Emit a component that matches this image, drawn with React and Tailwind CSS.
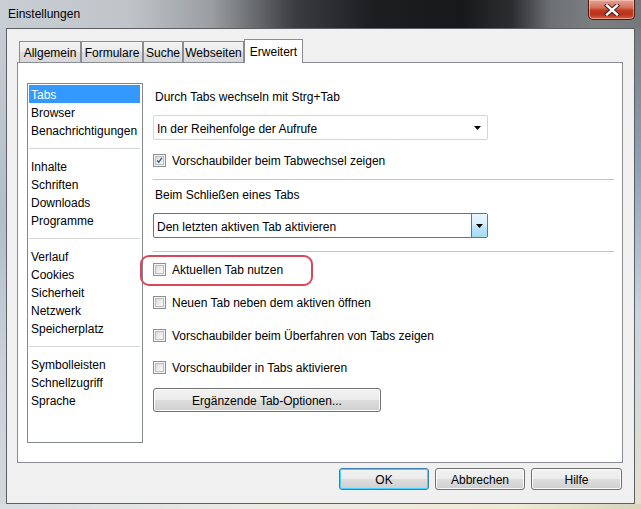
import React from "react";

const FONT = { fontFamily: '"Liberation Sans", Arial, sans-serif' };

function Arrow() {
  return (
    <svg width="7" height="4" viewBox="0 0 7 4" className="block">
      <path d="M0 0 H7 L3.5 4 Z" fill="#000" />
    </svg>
  );
}

function Checkbox({ checked }) {
  return (
    <span className="w-[13px] h-[13px] border border-[#8e8f8f] bg-[#f4f4f4] flex items-center justify-center shrink-0">
      <span className="w-[9px] h-[9px] border border-[#b9bcc0] bg-gradient-to-br from-[#dcdcdc] to-[#fbfbfb] flex items-center justify-center">
        {checked && (
          <svg width="9" height="9" viewBox="0 0 9 9" className="block">
            <path d="M1.5 4.5 L3.5 6.8 L7.5 1.2" stroke="#2c4a8a" strokeWidth="1.6" fill="none" />
          </svg>
        )}
      </span>
    </span>
  );
}

function CheckRow({ checked, label, children }) {
  return (
    <div className="relative h-[20px] flex items-center gap-[6px]">
      <Checkbox checked={checked} />
      <span className="text-[12px] text-black pt-[2px]">{label}</span>
      {children}
    </div>
  );
}

function Button({ label, focused, className = "" }) {
  return (
    <div
      className={
        "h-[22px] rounded-[3px] flex items-center justify-center text-[12px] text-black pt-[1px] " +
        (focused
          ? "border border-[#3c7fb1] shadow-[inset_0_0_0_1px_#48d1fe] bg-[linear-gradient(#f2f2f2_0%,#ebebeb_50%,#dddddd_51%,#cfcfcf_100%)] "
          : "border border-[#707070] shadow-[inset_0_0_0_1px_#fcfcfc] bg-[linear-gradient(#f2f2f2_0%,#ebebeb_50%,#dddddd_51%,#cfcfcf_100%)] ") +
        className
      }
    >
      {label}
    </div>
  );
}

const listGroups = [
  ["Tabs", "Browser", "Benachrichtigungen"],
  ["Inhalte", "Schriften", "Downloads", "Programme"],
  ["Verlauf", "Cookies", "Sicherheit", "Netzwerk", "Speicherplatz"],
  ["Symbolleisten", "Schnellzugriff", "Sprache"],
];

export default function App() {
  return (
    <div
      style={FONT}
      className="w-[641px] h-[509px] overflow-hidden flex flex-col bg-[linear-gradient(90deg,#c9ced4_0%,#bfc4c9_20%,#9a9ea2_33%,#3a3c3f_46%,#1c1e20_58%,#16181a_72%,#2c2e30_80%,#6e7174_86%,#7c7f82_93%,#75787b_100%)]"
    >
      {/* Title bar */}
      <div className="h-[28px] shrink-0 flex items-start relative">
        <span className="pl-[8px] pt-[7px] text-[12px] text-black leading-[15px]">Einstellungen</span>
        <div className="ml-auto mr-[6px] w-[47px] h-[20px] rounded-b-[5px] border border-t-0 border-[#4c1c14] bg-[linear-gradient(#e6a596_0%,#d0705a_40%,#c23a20_55%,#b8321c_75%,#d8613e_100%)] shadow-[inset_0_0_0_1px_rgba(255,210,200,0.55)] flex items-center justify-center">
          <svg width="16" height="12" viewBox="0 0 16 12" className="block">
            <path d="M3 1.5 L13 10.5 M13 1.5 L3 10.5" stroke="#3a1510" strokeWidth="4.2" strokeLinecap="square" />
            <path d="M3 1.5 L13 10.5 M13 1.5 L3 10.5" stroke="#ffffff" strokeWidth="2.4" strokeLinecap="square" />
          </svg>
        </div>
      </div>

      {/* Middle */}
      <div className="flex flex-1">
        <div className="w-[6px] bg-[linear-gradient(#c6ccd2,#b4bdc8_40%,#c9d0d8_70%,#d3d8dd)]" />
        <div className="w-[629px] h-[476px] border border-[#5c5f63] bg-[#f0f0f0] flex flex-col">
          {/* Tabs */}
          <div className="pt-[10px] pl-[10px]">
            <div className="flex items-end h-[23px] pl-[2px] text-[12px] text-black">
              {[
                ["Allgemein", "w-[62px]"],
                ["Formulare", "w-[62px]"],
                ["Suche", "w-[40px]"],
                ["Webseiten", "w-[61px]"],
              ].map(([t, w]) => (
                <div
                  key={t}
                  className={
                    w +
                    " h-[21px] border border-b-0 border-[#898c95] bg-[linear-gradient(#f3f3f3,#ebebeb_50%,#dedede_51%,#d7d7d7)] flex items-center justify-center pt-[2px]"
                  }
                >
                  {t}
                </div>
              ))}
              <div className="w-[59px] h-[24px] -mb-[1px] relative z-10 border border-b-0 border-[#898c95] bg-white flex items-start justify-center pt-[3px]">
                Erweitert
              </div>
            </div>
            {/* Panel */}
            <div className="w-[606px] h-[401px] border border-[#898c95] bg-white flex pt-[20px] pl-[9px]">
              {/* List */}
              <div className="w-[116px] h-[360px] border border-[#828790] bg-white pt-[1px] flex flex-col text-[12px] text-black">
                {listGroups.map((g, gi) => (
                  <React.Fragment key={gi}>
                    {gi > 0 && (
                      <div className="h-[18px] flex items-center pl-[1px] pr-[2px]">
                        <div className="h-px w-full bg-[#d6d6d6]" />
                      </div>
                    )}
                    {g.map((item) => (
                      <div
                        key={item}
                        className={
                          "h-[18px] ml-[1px] mr-[2px] pl-[2px] pt-[2px] flex items-center whitespace-nowrap " +
                          (item === "Tabs" ? "bg-[#3399ff] text-white" : "")
                        }
                      >
                        {item}
                      </div>
                    ))}
                  </React.Fragment>
                ))}
              </div>

              {/* Content */}
              <div className="ml-[10px] w-[461px] flex flex-col text-[12px] text-black">
                <div className="h-[26px] flex items-center pl-[2px] pt-[2px]">Durch Tabs wechseln mit Strg+Tab</div>
                <div className="mt-[6px] w-[335px] h-[25px] border border-[#d4d4d4] rounded-[2px] flex items-center pl-[3px] pr-[6px]">
                  <span className="flex-1 pt-[2px]">In der Reihenfolge der Aufrufe</span>
                  <Arrow />
                </div>
                <div className="mt-[10px]">
                  <CheckRow checked label="Vorschaubilder beim Tabwechsel zeigen" />
                </div>
                <div className="mt-[9px] h-px bg-[#c4c4c4]" />
                <div className="mt-[4px] h-[20px] flex items-center pl-[2px] pt-[2px]">Beim Schließen eines Tabs</div>
                <div className="mt-[9px] w-[335px] h-[25px] border border-[#3c7fb1] rounded-[2px] flex items-stretch">
                  <span className="flex-1 flex items-center pl-[3px] pt-[2px]">Den letzten aktiven Tab aktivieren</span>
                  <span className="w-[16px] border-l border-[#3c7fb1] bg-[linear-gradient(#eaf6fd,#d9f0fc_45%,#bee6fd_55%,#a7d9f5)] flex items-center justify-center">
                    <Arrow />
                  </span>
                </div>
                <div className="mt-[13px] h-px bg-[#c4c4c4]" />
                <div className="mt-[7px]">
                  <CheckRow label="Aktuellen Tab nutzen">
                    <span className="absolute left-[-13px] top-[-4px] w-[173px] h-[31px] border-2 border-[#d9475a] rounded-[9px]" />
                  </CheckRow>
                </div>
                <div className="mt-[13px]">
                  <CheckRow label="Neuen Tab neben dem aktiven öffnen" />
                </div>
                <div className="mt-[13px]">
                  <CheckRow label="Vorschaubilder beim Überfahren von Tabs zeigen" />
                </div>
                <div className="mt-[12px]">
                  <CheckRow label="Vorschaubilder in Tabs aktivieren" />
                </div>
                <div className="mt-[11px] w-[228px]">
                  <Button label="Ergänzende Tab-Optionen..." className="h-[24px]" />
                </div>
              </div>
            </div>
          </div>
          {/* Bottom buttons */}
          <div className="mt-[5px] flex justify-end gap-[6px] pr-[12px]">
            <Button label="OK" focused className="w-[90px]" />
            <Button label="Abbrechen" className="w-[90px]" />
            <Button label="Hilfe" className="w-[91px]" />
          </div>
        </div>
        <div className="flex-1 bg-[linear-gradient(#7a7d80,#8fa3b8_30%,#c9d4de_60%,#e4e0cf)]" />
      </div>
      <div className="h-[5px] shrink-0 bg-[linear-gradient(90deg,#d8dde2,#eceae4_40%,#efe9d6_80%,#d9d3bd)]" />
    </div>
  );
}
